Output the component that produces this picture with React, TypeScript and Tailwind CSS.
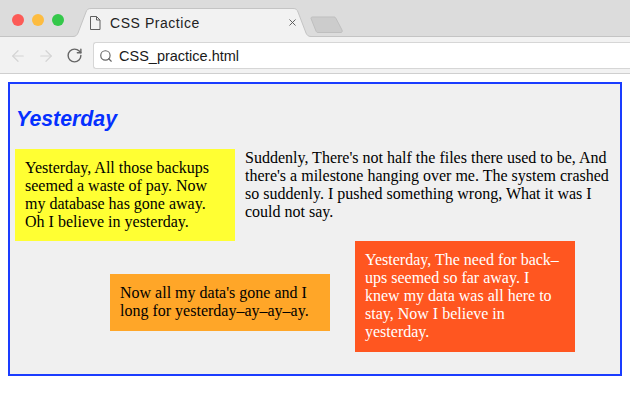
import { ArrowLeft, ArrowRight, RotateCw, Search, X } from "lucide-react";

// Browser chrome on top, the float-demo page below.
function TabStrip() {
  return (
    <div className="flex h-[37px] items-end border-b border-[#c4c4c4] bg-[#dcdcdc]">
      <div className="flex h-full items-center gap-2 pl-3 pt-[3px]">
        <span className="h-3 w-3 rounded-full bg-[#fc5b57]" />
        <span className="h-3 w-3 rounded-full bg-[#fdbc40]" />
        <span className="h-3 w-3 rounded-full bg-[#34c84a]" />
      </div>
      <div className="relative ml-[7px] flex h-[29px] w-[244px] items-center pl-[19px] pr-[17px] mb-[-1px]">
        <svg className="absolute inset-0" width="244" height="29" viewBox="0 0 244 29" fill="none">
          <path d="M0 28.5 H2 C5 28.5 6 27 7 25 L15 4 C16 1.5 17 0.5 20 0.5 H222 C225 0.5 226 1.5 227 4 L235 25 C236 27 237 28.5 240 28.5 H244 V29 H0 Z" fill="#f2f2f2" />
          <path d="M0 28.5 H2 C5 28.5 6 27 7 25 L15 4 C16 1.5 17 0.5 20 0.5 H222 C225 0.5 226 1.5 227 4 L235 25 C236 27 237 28.5 240 28.5 H244" stroke="#c4c4c4" />
        </svg>
        <svg className="relative" width="11" height="16" viewBox="0 0 11 16" fill="none" stroke="#5f5f5f" strokeWidth="1">
          <path d="M0.5 1.5 H6.5 L10 5 V14.5 H0.5 Z M6.5 1.5 V5 H10" />
        </svg>
        <span className="relative ml-[9px] flex-1 font-['Liberation_Sans',sans-serif] text-[14px] tracking-[0.55px] text-[#222222]">CSS Practice</span>
        <X className="relative text-[#555555]" size={11} strokeWidth={2} />
      </div>
      <svg className="mb-[2px] ml-[-5px]" width="36" height="18" viewBox="0 0 36 18" fill="none">
        <path d="M1 2.5 C1 1.5 1.5 1 2.5 1 H24 C25 1 25.5 1.5 26 2.5 L32 14 C32.5 15.5 32 16.5 31 16.5 H8 C7 16.5 6.5 16 6 15 Z" fill="#cccccc" stroke="#bfbfbf" />
      </svg>
    </div>
  );
}

function Toolbar() {
  return (
    <div className="flex h-[37px] items-start border-b border-[#cfcfcf] bg-[#f2f2f2] pt-[5px]">
      <div className="flex h-[27px] w-[93px] items-center pl-[9px] text-[#d4d4d4]">
        <ArrowLeft size={18} strokeWidth={1.6} />
        <ArrowRight className="ml-[10px]" size={18} strokeWidth={1.6} />
        <RotateCw className="ml-[11px] text-[#666666]" size={17} strokeWidth={2} />
      </div>
      <div className="flex h-[27px] flex-1 items-center rounded-l-[3px] border-y border-l border-[#d6d6d6] bg-white pl-[5px]">
        <Search className="text-[#666666]" size={14} strokeWidth={2} />
        <span className="ml-[6px] font-['Liberation_Sans',sans-serif] text-[14.5px] text-[#1a1a1a]">CSS_practice.html</span>
      </div>
    </div>
  );
}

export default function App() {
  const boxBase = "w-[220px] shrink-0 p-[10px]";

  return (
    <div className="h-[406px] w-[630px] overflow-hidden bg-white font-['Liberation_Serif',serif] text-[16px] leading-[18px] text-black">
      <TabStrip />
      <Toolbar />
      <div className="px-2 pt-2">
        <div className="h-[294px] border-2 border-[#1a3cff] bg-[#f0f0f0] pl-[5px] pr-[12px]">
          <h1 className="pl-[1px] pt-[22px] font-['Liberation_Sans',sans-serif] text-[21.3px] leading-[27px] font-bold italic text-[#0530ff]">
            Yesterday
          </h1>
          <div className="mt-4 flex items-start">
            <div className={`${boxBase} h-[92px] bg-[#ffff33]`}>
              Yesterday, All those backups seemed a waste of pay. Now my database has gone away. Oh I believe in yesterday.
            </div>
            <p className="ml-[10px] whitespace-nowrap">
              Suddenly, There's not half the files there used to be, And
              <br />
              there's a milestone hanging over me. The system crashed
              <br />
              so suddenly. I pushed something wrong, What it was I
              <br />
              could not say.
            </p>
          </div>
          <div className="flex items-start pl-[95px]">
            <div className={`${boxBase} mt-[33px] h-[57px] bg-[#ffa628]`}>
              Now all my data's gone and I long for yesterday–ay–ay–ay.
            </div>
            <div className={`${boxBase} ml-[25px] h-[111px] bg-[#ff5620] text-white`}>
              Yesterday, The need for back–
              <br />
              ups seemed so far away. I knew my data was all here to stay, Now I believe in yesterday.
            </div>
          </div>
        </div>
      </div>
    </div>
  );
}
